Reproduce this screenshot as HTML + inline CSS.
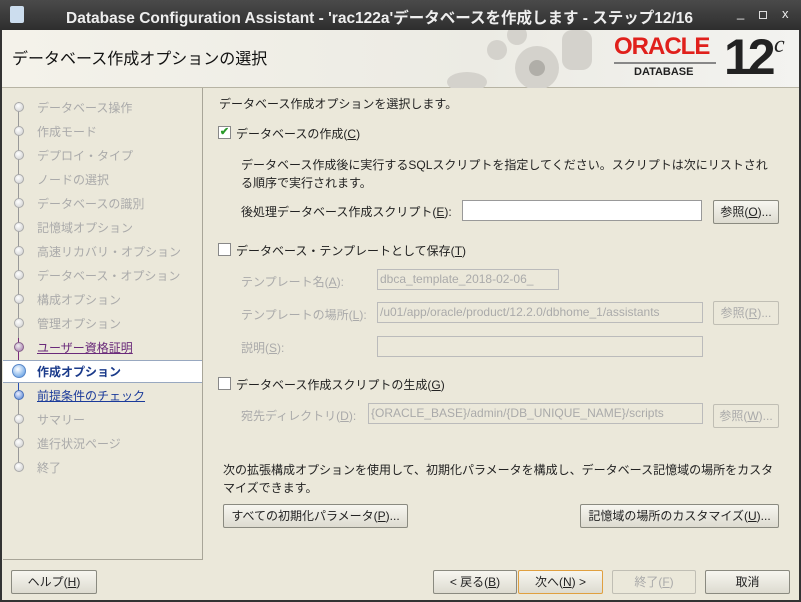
<!DOCTYPE html>
<html><head><meta charset="utf-8"><style>
*{margin:0;padding:0;box-sizing:border-box}
body{width:801px;height:602px;overflow:hidden;background:#ebe8da;font-family:"Liberation Sans","Noto Sans CJK JP",sans-serif;font-size:12px;color:#222;position:relative}
.a{position:absolute;white-space:nowrap}
#tb{left:0;top:0;width:801px;height:30px;background:linear-gradient(#4a4a4a,#2e2e2e);color:#eee;font-size:15.5px;font-weight:bold}
#hd{left:2px;top:30px;width:797px;height:58px;background:linear-gradient(90deg,#f4f2ea,#ecebe4 60%,#f3f3f0);border-bottom:1px solid #b7b4a4}
#lp{left:3px;top:88px;width:200px;height:472px;border-right:1px solid #a8a598;border-bottom:1px solid #a8a598}
.st{left:37px;color:#aaa;font-size:12px}
.dot{width:10px;height:10px;border-radius:50%;background:radial-gradient(circle at 40% 35%,#fff,#ccc);border:1px solid #aaa;left:14px}
.btn{height:24px;border:1px solid #8a8a80;border-radius:2px;background:linear-gradient(#f7f6f0,#dddbd0);text-align:center;line-height:22px;font-size:12px}
.cb{width:13px;height:13px;border:1px solid #888;background:#fff}
.in{height:21px;border:1px solid #999;background:#fff}
.dis{border-color:#bbb;background:#ebe8da;color:#aaa}
u{text-decoration:underline}
.g{color:#aaa}
</style></head><body>
<div class="a" id="tb"><span class="a" style="left:10px;top:6px;width:14px;height:17px;background:#cde;border-radius:2px"></span><span class="a" style="left:66px;top:6px">Database Configuration Assistant - 'rac122a'データベースを作成します - ステップ12/16</span>
<span class="a" style="left:737px;top:5px;font-weight:normal;font-size:13px">_</span>
<span class="a" style="left:759px;top:11px;width:8px;height:8px;border:1px solid #ddd"></span>
<span class="a" style="left:782px;top:6px;font-weight:normal;font-size:13px">x</span></div>
<div class="a" id="hd">
<span class="a" style="left:10px;top:15px;font-size:16px;color:#111">データベース作成オプションの選択</span>
<svg class="a" style="left:440px;top:0" width="160" height="58"><g fill="#d4d2cc"><circle cx="95" cy="38" r="22"/><circle cx="55" cy="20" r="10"/><circle cx="75" cy="5" r="10"/><rect x="120" y="0" width="30" height="40" rx="10"/><ellipse cx="25" cy="52" rx="20" ry="10"/></g><circle cx="95" cy="38" r="8" fill="#b0aea8"/></svg>
<span class="a" style="left:612px;top:3px;color:#e0201b;font-size:24px;font-weight:bold;letter-spacing:-1px">ORACLE</span>
<span class="a" style="left:612px;top:32px;width:102px;height:2px;background:#888"></span>
<span class="a" style="left:632px;top:36px;font-size:11px;font-weight:bold">DATABASE</span>
<span class="a" style="left:722px;top:-2px;font-size:50px;font-weight:bold;letter-spacing:-4px">12</span>
<span class="a" style="left:772px;top:2px;font-size:24px;font-style:italic;font-family:'Liberation Serif',serif">c</span>
</div>
<div class="a" id="lp">
<span class="a" style="left:15px;top:14px;width:1px;height:364px;background:#999"></span>
<span class="a" style="left:15px;top:250px;width:1px;height:22px;background:#7a2a7a"></span>
<span class="a" style="left:15px;top:272px;width:1px;height:36px;background:#2a50b0"></span>
<span class="a" style="left:0;top:272px;width:199px;height:23px;background:#fff;border-top:1px solid #98a8c0;border-bottom:1px solid #98a8c0"></span>
</div>
<div class="dot a" style="top:102px"></div><span class="a st" style="top:99px">データベース操作</span>
<div class="dot a" style="top:126px"></div><span class="a st" style="top:123px">作成モード</span>
<div class="dot a" style="top:150px"></div><span class="a st" style="top:147px">デプロイ・タイプ</span>
<div class="dot a" style="top:174px"></div><span class="a st" style="top:171px">ノードの選択</span>
<div class="dot a" style="top:198px"></div><span class="a st" style="top:195px">データベースの識別</span>
<div class="dot a" style="top:222px"></div><span class="a st" style="top:219px">記憶域オプション</span>
<div class="dot a" style="top:246px"></div><span class="a st" style="top:243px">高速リカバリ・オプション</span>
<div class="dot a" style="top:270px"></div><span class="a st" style="top:267px">データベース・オプション</span>
<div class="dot a" style="top:294px"></div><span class="a st" style="top:291px">構成オプション</span>
<div class="dot a" style="top:318px"></div><span class="a st" style="top:315px">管理オプション</span>
<div class="dot a" style="top:342px;background:radial-gradient(circle at 40% 35%,#eee,#a070a8);border-color:#86608a"></div><span class="a st" style="top:339px;color:#6a2a7a;text-decoration:underline">ユーザー資格証明</span>
<div class="dot a" style="top:364px;left:12px;width:14px;height:14px;background:radial-gradient(circle at 40% 35%,#fff,#4a90e0);border-color:#5a88c8"></div><span class="a st" style="top:363px;color:#1a3a8a;font-weight:bold">作成オプション</span>
<div class="dot a" style="top:390px;background:radial-gradient(circle at 40% 35%,#eef,#4a80d0);border-color:#4a70b8"></div><span class="a st" style="top:387px;color:#1a3a9a;text-decoration:underline">前提条件のチェック</span>
<div class="dot a" style="top:414px"></div><span class="a st" style="top:411px">サマリー</span>
<div class="dot a" style="top:438px"></div><span class="a st" style="top:435px">進行状況ページ</span>
<div class="dot a" style="top:462px"></div><span class="a st" style="top:459px">終了</span>

<span class="a" style="left:219px;top:95px">データベース作成オプションを選択します。</span>
<div class="a cb" style="left:218px;top:126px;color:#2a9a2a;font-size:11px;line-height:11px;text-align:center;font-weight:bold">✔</div>
<span class="a" style="left:236px;top:125px">データベースの作成(<u>C</u>)</span>
<span class="a" style="left:241px;top:156px">データベース作成後に実行するSQLスクリプトを指定してください。スクリプトは次にリストされ</span>
<span class="a" style="left:241px;top:174px">る順序で実行されます。</span>
<span class="a" style="left:241px;top:203px">後処理データベース作成スクリプト(<u>E</u>):</span>
<div class="a in" style="left:462px;top:200px;width:240px"></div>
<div class="a btn" style="left:713px;top:200px;width:66px">参照(<u>O</u>)...</div>
<div class="a cb" style="left:218px;top:243px"></div>
<span class="a" style="left:236px;top:242px">データベース・テンプレートとして保存(<u>T</u>)</span>
<span class="a g" style="left:241px;top:273px">テンプレート名(<u>A</u>):</span>
<div class="a in dis" style="left:377px;top:269px;width:182px;line-height:19px;padding-left:2px">dbca_template_2018-02-06_</div>
<span class="a g" style="left:241px;top:306px">テンプレートの場所(<u>L</u>):</span>
<div class="a in dis" style="left:377px;top:302px;width:326px;line-height:19px;padding-left:2px;overflow:hidden">/u01/app/oracle/product/12.2.0/dbhome_1/assistants</div>
<div class="a btn" style="left:713px;top:301px;width:66px;color:#aaa;border-color:#c0beb4;background:#ebe8da">参照(<u>R</u>)...</div>
<span class="a g" style="left:241px;top:339px">説明(<u>S</u>):</span>
<div class="a in dis" style="left:377px;top:336px;width:326px"></div>
<div class="a cb" style="left:218px;top:377px"></div>
<span class="a" style="left:236px;top:376px">データベース作成スクリプトの生成(<u>G</u>)</span>
<span class="a g" style="left:241px;top:407px">宛先ディレクトリ(<u>D</u>):</span>
<div class="a in dis" style="left:368px;top:403px;width:335px;line-height:19px;padding-left:2px">{ORACLE_BASE}/admin/{DB_UNIQUE_NAME}/scripts</div>
<div class="a btn" style="left:713px;top:404px;width:66px;color:#aaa;border-color:#c0beb4;background:#ebe8da">参照(<u>W</u>)...</div>
<span class="a" style="left:223px;top:461px">次の拡張構成オプションを使用して、初期化パラメータを構成し、データベース記憶域の場所をカスタ</span>
<span class="a" style="left:223px;top:479px">マイズできます。</span>
<div class="a btn" style="left:223px;top:504px;width:185px">すべての初期化パラメータ(<u>P</u>)...</div>
<div class="a btn" style="left:580px;top:504px;width:199px">記憶域の場所のカスタマイズ(<u>U</u>)...</div>
<div class="a btn" style="left:11px;top:570px;width:86px">ヘルプ(<u>H</u>)</div>
<div class="a btn" style="left:433px;top:570px;width:84px">&lt; 戻る(<u>B</u>)</div>
<div class="a btn" style="left:518px;top:570px;width:85px;border-color:#e0a040">次へ(<u>N</u>) &gt;</div>
<div class="a btn" style="left:612px;top:570px;width:84px;color:#aaa;border-color:#c0beb4;background:#ebe8da">終了(<u>F</u>)</div>
<div class="a btn" style="left:705px;top:570px;width:85px">取消</div>
<span class="a" style="left:0;top:30px;width:2px;height:572px;background:#333"></span>
<span class="a" style="left:799px;top:30px;width:2px;height:572px;background:#333"></span>
<span class="a" style="left:0;top:600px;width:801px;height:2px;background:#333"></span>
</body></html>
